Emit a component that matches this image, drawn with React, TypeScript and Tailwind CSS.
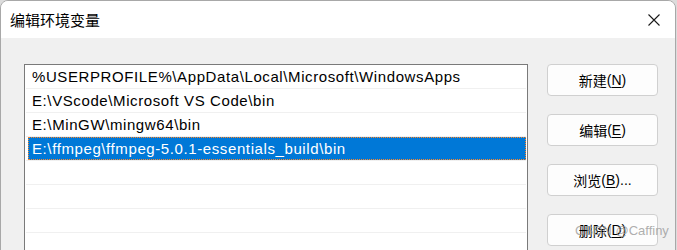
import React from 'react';

const latin = "font-['Segoe_UI','Liberation_Sans','Noto_Sans_CJK_SC',sans-serif]";
const cjk = "font-['Microsoft_YaHei_UI','Noto_Sans_CJK_SC','Liberation_Sans',sans-serif]";

const paths = [
  '%USERPROFILE%\\AppData\\Local\\Microsoft\\WindowsApps',
  'E:\\VScode\\Microsoft VS Code\\bin',
  'E:\\MinGW\\mingw64\\bin',
  'E:\\ffmpeg\\ffmpeg-5.0.1-essentials_build\\bin',
  '',
  '',
  '',
  '',
];

const selected = 3;

const buttons = [
  { label: '新建', key: 'N', tail: '' },
  { label: '编辑', key: 'E', tail: '' },
  { label: '浏览', key: 'B', tail: '...' },
  { label: '删除', key: 'D', tail: '' },
];

export default function App() {
  return (
    <div className="w-[677px] h-[250px] overflow-hidden bg-[#dcdcdc]">
      <div className="w-[676px] h-[260px] rounded-t-[8px] border border-[#a8a8a8] overflow-hidden flex flex-col bg-[#f0f0f0]">
        {/* Title bar */}
        <div className="h-[37px] shrink-0 bg-white flex items-center justify-between pl-[9px] pr-[15px]">
          <span className={`${cjk} text-[15px] text-black leading-none`}>编辑环境变量</span>
          <svg width="12" height="12" viewBox="0 0 12 12">
            <path d="M0.5 0.5 L11.5 11.5 M11.5 0.5 L0.5 11.5" stroke="#1a1a1a" strokeWidth="1.1" />
          </svg>
        </div>

        {/* Body */}
        <div className="flex pt-[26px] pl-[23px]">
          <div className="w-[504px] h-[200px] shrink-0 border border-[#7a7a7a] bg-white">
            {paths.map((p, i) => (
              <div key={i} className="h-[24px] mx-[1px] border-b border-[#f0f0f0]">
                <div
                  className={`h-[23px] ml-[2px] pl-[3px] flex items-center ${latin} text-[15px] tracking-[0.6px] leading-none ${
                    i === selected
                      ? 'bg-[#0078d7] text-white border border-dotted border-[#ff8728]'
                      : 'text-black border border-transparent'
                  }`}
                >
                  {p}
                </div>
              </div>
            ))}
          </div>

          <div className="flex flex-col gap-[18px] ml-[19px]">
            {buttons.map((b) => (
              <div
                key={b.key}
                className="w-[111px] h-[32px] rounded-[4px] border border-[#d0d0d0] bg-[#fdfdfd] flex items-center justify-center text-[14px] text-black leading-none"
              >
                <span className={cjk}>{b.label}</span>
                <span className={latin}>
                  (<span className="underline underline-offset-2">{b.key}</span>){b.tail}
                </span>
              </div>
            ))}
          </div>
        </div>
      </div>

      {/* watermark */}
      <div className={`absolute left-[575px] top-[224px] ${latin} text-[13px] text-[#9a9a9a]/80 leading-none`}>
        CSDN @Caffiny
      </div>
    </div>
  );
}
